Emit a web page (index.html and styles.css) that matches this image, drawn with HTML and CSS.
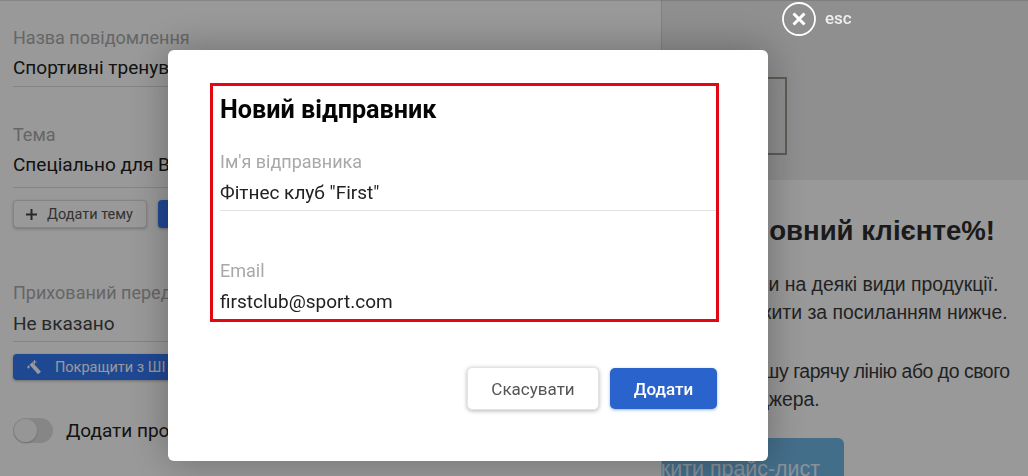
FILE: index.html
```html
<!DOCTYPE html>
<html lang="uk">
<head>
<meta charset="utf-8">
<title>Новий відправник</title>
<link rel="stylesheet" href="styles.css">
</head>
<body>
<div class="page">
  <section class="editor">
    <div class="field field-name">
      <div class="field-label">Назва повідомлення</div>
      <div class="field-value">Спортивні тренування</div>
    </div>
    <div class="field field-subject">
      <div class="field-label">Тема</div>
      <div class="field-value">Спеціально для Вас</div>
    </div>
    <div class="btn-row">
      <button class="btn-small btn-outline">
        <svg class="icon-plus" viewBox="0 0 13 13"><path d="M6.5 1v11M1 6.5h11"/></svg>
        Додати тему
      </button>
      <button class="btn-small btn-blue btn-wide">Покращити з ШІ</button>
    </div>
    <div class="field field-preheader">
      <div class="field-label">Прихований передхедер</div>
      <div class="field-value field-muted">Не вказано</div>
    </div>
    <button class="btn-small btn-blue btn-ai">
      <svg class="icon-wand" viewBox="0 0 16 16">
        <path class="wand-stick" d="M5 4.5 13.5 14"/>
        <path class="wand-spark" d="M8.5 1v4M6.5 3h4M1 8h3M2.5 6.5v3"/>
      </svg>
      <span>Покращити з ШІ</span>
    </button>
    <div class="toggle-row">
      <span class="toggle"><span class="toggle-knob"></span></span>
      <span class="toggle-label">Додати промокод</span>
    </div>
  </section>
  <section class="preview">
    <div class="preview-top">
      <div class="logo-box"></div>
    </div>
    <div class="preview-body">
      <h2 class="greeting">О шановний клієнте%!</h2>
      <p class="copy copy-first">Нижчі ціни на деякі види продукції.<br>Завантажити за посиланням нижче.</p>
      <p class="copy copy-second"><span class="copy-tight">Чи, на нашу гарячу лінію або до свого</span><br>до менеджера.</p>
      <a class="cta">Завантажити прайс-лист</a>
    </div>
  </section>
</div>

<div class="overlay">
  <div class="close">
    <svg class="close-icon" viewBox="0 0 34 34">
      <circle cx="17" cy="17" r="16"/>
      <path d="M11.5 11.5 22.5 22.5M22.5 11.5 11.5 22.5"/>
    </svg>
    <span class="close-text">esc</span>
  </div>
  <div class="modal">
    <div class="highlight">
      <h1 class="modal-title">Новий відправник</h1>
      <div class="input-group input-first">
        <div class="input-label">Ім'я відправника</div>
        <div class="input-value">Фітнес клуб "First"</div>
      </div>
      <div class="input-group input-last">
        <div class="input-label">Email</div>
        <div class="input-value">firstclub@sport.com</div>
      </div>
    </div>
    <div class="modal-actions">
      <button class="action action-cancel">Скасувати</button>
      <button class="action action-add">Додати</button>
    </div>
  </div>
</div>
</body>
</html>
```
FILE: styles.css
```css
* { box-sizing: border-box; }
html, body { margin: 0; height: 100%; overflow: hidden; }
body { font-family: Roboto, "Liberation Sans", sans-serif; background: #fff; }
button { font-family: inherit; cursor: pointer; }

.page { display: flex; width: 1028px; height: 476px; overflow: hidden; }

.editor {
  width: 662px;
  flex: none;
  padding: 28px 0 0 13px;
  background: #fff;
  border-right: 1px solid #d8d8d8;
  position: relative;
  z-index: 1;
}
.field { border-bottom: 1px solid #ddd; }
.field-label { font-size: 18px; line-height: 20px; color: #aaa; }
.field-value { font-size: 19px; line-height: 24px; color: #212121; margin-top: 8px; white-space: nowrap; }
.field-muted { color: #444; margin-top: 9px; }
.field-name .field-value { padding-bottom: 6px; }
.field-subject { margin-top: 38px; }
.field-subject .field-value { padding-bottom: 10px; }
.field-preheader { margin-top: 55px; }
.field-preheader .field-value { padding-bottom: 5px; }

.btn-row { display: flex; gap: 11px; margin-top: 12px; }
.btn-small {
  display: flex;
  align-items: center;
  border-radius: 4px;
  font-size: 14.5px;
  border: 0;
  white-space: nowrap;
}
.btn-outline {
  width: 134px;
  height: 28px;
  padding: 0 0 0 11px;
  gap: 9px;
  color: #555;
  background: #fff;
  border: 1px solid #ddd;
  box-shadow: 0 1px 3px rgba(0,0,0,.25);
}
.icon-plus { width: 13px; height: 13px; fill: none; stroke: #444; stroke-width: 2; }
.btn-blue { color: #fff; background: #3478f6; box-shadow: 0 1px 3px rgba(0,0,0,.3); }
.btn-wide { width: 150px; height: 28px; padding-left: 12px; }
.btn-ai { width: 200px; height: 26px; margin-top: 12px; padding: 0 0 0 13px; gap: 13px; }
.icon-wand { width: 16px; height: 16px; fill: none; }
.wand-stick { stroke: #fff; stroke-width: 4; }
.wand-spark { stroke: #fff; stroke-width: 1; }

.toggle-row { display: flex; align-items: center; gap: 13px; margin-top: 38px; }
.toggle { display: flex; align-items: center; width: 40px; height: 25px; padding-left: 1px; border-radius: 13px; background: #e0e0e0; }
.toggle-knob { width: 23px; height: 23px; border-radius: 50%; background: #fafafa; box-shadow: 0 1px 2px rgba(0,0,0,.2); }
.toggle-label { font-size: 19px; color: #212121; white-space: nowrap; }

.preview { flex: 1; min-width: 0; overflow: hidden; font-family: "Liberation Sans", Arial, sans-serif; background: #fff; }
.preview-top { height: 180px; padding: 77px 0 0 23px; background: #eee; }
.logo-box { width: 102px; height: 78px; border: 2px solid #9a9a92; }
.preview-body { padding: 34px 0 0 23px; color: #333; white-space: nowrap; }
.greeting { margin: 0; font-size: 27.6px; line-height: 34px; font-weight: 700; color: #2e2e2e; }
.copy { margin: 0; font-size: 19.4px; line-height: 28px; color: #3a3a3a; }
.copy-first { margin-top: 22px; }
.copy-second { margin-top: 31px; }
.copy-tight { letter-spacing: -.45px; }
.cta {
  display: block;
  width: 340px;
  height: 60px;
  margin: 25px 0 0 -181px;
  padding: 16px 24px 0 0;
  text-align: right;
  font-size: 21.4px;
  line-height: 30px;
  color: #e4f3ff;
  background: #71b8e6;
  border-radius: 6px;
}

.overlay {
  position: fixed;
  inset: 0;
  z-index: 5;
  background: rgba(0,0,0,.4);
  box-shadow: inset 0 1px 0 rgba(0,0,0,.12);
}
.close {
  position: absolute;
  left: 782px;
  top: 2px;
  display: flex;
  align-items: center;
  gap: 9px;
  font-size: 17px;
  font-weight: 500;
  color: #eee;
}
.close-text { margin-bottom: 2px; }
.close-icon { width: 34px; height: 34px; fill: none; stroke: #fff; }
.close-icon circle { stroke-width: 1.8; }
.close-icon path { stroke-width: 3; }

.modal {
  position: absolute;
  left: 168px;
  top: 50px;
  width: 600px;
  height: 411px;
  padding: 33px 49px 0 42px;
  background: #fff;
  border-radius: 6px;
  box-shadow: 0 0 40px rgba(0,0,0,.3);
}
.highlight {
  height: 239px;
  padding: 10px 0 0 7px;
  border: 3px solid #e30613;
}
.modal-title { margin: 0; font-size: 25.2px; line-height: 28px; font-weight: 700; color: #050505; }
.input-group { white-space: nowrap; }
.input-label { font-size: 18px; line-height: 20px; color: #a8a8a8; }
.input-value { font-size: 19px; line-height: 24px; color: #212121; margin-top: 9px; }
.input-first { margin-top: 28px; padding-bottom: 5px; border-bottom: 1px solid #e2e2e2; }
.input-last { margin-top: 50px; }

.modal-actions { display: flex; align-items: center; justify-content: flex-end; gap: 11px; margin: 45px 2px 0 0; }
.action { height: 41px; border-radius: 5px; font-size: 17px; }
.action-cancel { width: 132px; height: 43px; color: #555; background: #fff; border: 1px solid #e4e4e4; box-shadow: 0 1px 4px rgba(0,0,0,.3); }
.action-add { width: 107px; color: #fff; font-weight: 500; background: #2b63cc; border: 0; box-shadow: 0 1px 3px rgba(43,99,204,.5); }
```
